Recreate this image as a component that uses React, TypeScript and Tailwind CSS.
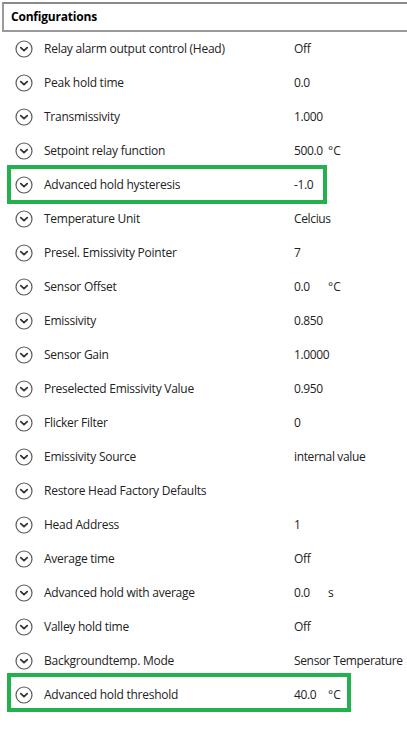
import React from "react";

type Row = { label: string; value?: string; unit?: string; highlight?: "a" | "b" };

const rows: Row[] = [
  { label: "Relay alarm output control (Head)", value: "Off" },
  { label: "Peak hold time", value: "0.0" },
  { label: "Transmissivity", value: "1.000" },
  { label: "Setpoint relay function", value: "500.0", unit: "°C" },
  { label: "Advanced hold hysteresis", value: "-1.0", highlight: "a" },
  { label: "Temperature Unit", value: "Celcius" },
  { label: "Presel. Emissivity Pointer", value: "7" },
  { label: "Sensor Offset", value: "0.0", unit: "°C" },
  { label: "Emissivity", value: "0.850" },
  { label: "Sensor Gain", value: "1.0000" },
  { label: "Preselected Emissivity Value", value: "0.950" },
  { label: "Flicker Filter", value: "0" },
  { label: "Emissivity Source", value: "internal value" },
  { label: "Restore Head Factory Defaults" },
  { label: "Head Address", value: "1" },
  { label: "Average time", value: "Off" },
  { label: "Advanced hold with average", value: "0.0", unit: "s" },
  { label: "Valley hold time", value: "Off" },
  { label: "Backgroundtemp. Mode", value: "Sensor Temperature" },
  { label: "Advanced hold threshold", value: "40.0", unit: "°C", highlight: "b" },
];

function ExpandIcon() {
  return (
    <svg width="18" height="18" viewBox="0 0 18 18" className="shrink-0">
      <circle cx="9" cy="9" r="8" fill="none" stroke="#5a5a5a" strokeWidth="1.2" />
      <path d="M5.8 7.6 L9 10.6 L12.2 7.6" fill="none" stroke="#333" strokeWidth="1.8" strokeLinecap="round" strokeLinejoin="round" />
    </svg>
  );
}

export default function App() {
  return (
    <div
      className="w-[407px] h-[729px] overflow-hidden bg-white text-[12px] text-[#222]"
      style={{ fontFamily: '"Open Sans", "Noto Sans", Arial, sans-serif' }}
    >
      <div className="mt-[2px] ml-[2px] h-[30px] border-y-2 border-l-2 border-[#9a9a9a] border-t-[#8a8a8a] flex items-center pl-[7px]">
        <span className="font-bold text-black tracking-[-0.2px]">Configurations</span>
      </div>
      <div className="flex flex-col">
        {rows.map((r) => (
          <div key={r.label} className="relative h-[34px] grid grid-cols-[44px_250px_34px_1fr] items-center">
            <div className="pl-[15px]">
              <ExpandIcon />
            </div>
            <span className="tracking-[-0.25px]">{r.label}</span>
            <span className="whitespace-nowrap tracking-[-0.35px]">{r.value}</span>
            <span>{r.unit}</span>
            {r.highlight === "a" && (
              <div className="absolute left-[7px] top-[-3px] bottom-[-2px] w-[320px] border-4 border-[#22b14c]" />
            )}
            {r.highlight === "b" && (
              <div className="absolute left-[7px] top-[-5px] bottom-0 w-[344px] border-4 border-[#22b14c]" />
            )}
          </div>
        ))}
      </div>
    </div>
  );
}
